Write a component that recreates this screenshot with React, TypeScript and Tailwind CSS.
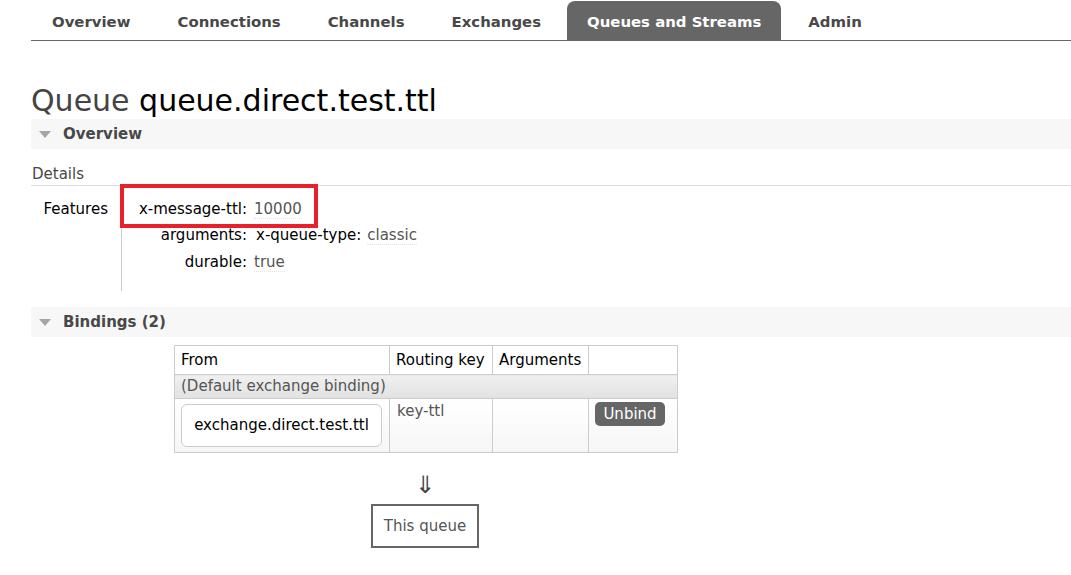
import React from "react";

const tabs = ["Overview", "Connections", "Channels", "Exchanges", "Queues and Streams", "Admin"];

function SectionBar({ title }: { title: string }) {
  return (
    <div className="flex h-[30px] items-center bg-[#f7f7f7]">
      <span className="ml-[8px] h-0 w-0 border-x-[6px] border-t-[7px] border-x-transparent border-t-[#a6a6a6]" />
      <span className="ml-[12px] text-[15px] font-bold text-[#484848]">{title}</span>
    </div>
  );
}

function Val({ children }: { children: React.ReactNode }) {
  return <span className="border-b border-dotted border-[#e4e4e4] text-[#555]">{children}</span>;
}

export default function App() {
  return (
    <div className="min-h-[575px] bg-white pl-[31px] font-['DejaVu_Sans',sans-serif] text-[15px] text-[#333]">
      {/* top tabs */}
      <ul className="flex h-[41px] items-end border-b border-[#666] text-[14.9px]">
        {tabs.map((t) =>
          t === "Queues and Streams" ? (
            <li
              key={t}
              className="mr-[6px] flex h-[39px] items-center rounded-t-[8px] bg-[#666] px-5 pt-[3px] font-bold text-white">
              {t}
            </li>
          ) : (
            <li key={t} className="mr-[6px] flex h-[39px] items-center px-5 pl-[21px] pt-[3px] font-bold text-[#484848]">
              {t}
            </li>
          )
        )}
      </ul>

      <h1 className="mt-[42px] text-[30px] leading-[36px] text-[#444]">
        Queue <span className="text-black">queue.direct.test.ttl</span>
      </h1>

      <SectionBar title="Overview" />

      <div className="relative pt-[15px]">
        <div className="border-b border-[#ddd] pb-px pl-px leading-[20px] text-[#484848]">Details</div>

        <div className="flex">
          <div className="w-[90px] shrink-0 pr-[13px] pt-[12px] text-right leading-[22px] text-black">Features</div>
          <div className="h-[105px] border-l border-[#ccc] pt-[10px]">
            <div className="flex h-[26px] items-center">
              <span className="w-[125px] text-right text-black">x-message-ttl:</span>
              <span className="ml-[7px]">
                <Val>10000</Val>
              </span>
            </div>
            <div className="flex h-[27px] items-center">
              <span className="w-[125px] text-right text-black">arguments:</span>
              <span className="ml-[9px] text-black">x-queue-type:</span>
              <span className="ml-[6px]">
                <Val>classic</Val>
              </span>
            </div>
            <div className="flex h-[27px] items-center">
              <span className="w-[125px] text-right text-black">durable:</span>
              <span className="ml-[7px]">
                <Val>true</Val>
              </span>
            </div>
          </div>
        </div>

        {/* red highlight annotation */}
        <div className="absolute left-[89px] top-[35px] h-[44px] w-[198px] border-4 border-[#e8202a]" />
      </div>

      <div className="mt-[16px]">
        <SectionBar title="Bindings (2)" />
      </div>

      <table className="ml-[143px] mt-[8px] table-fixed border-collapse whitespace-nowrap text-[15px]">
        <colgroup>
          <col className="w-[215px]" />
          <col className="w-[103px]" />
          <col className="w-[96px]" />
          <col className="w-[89px]" />
        </colgroup>
        <thead>
          <tr className="h-[29px] text-black">
            <th className="border border-[#ccc] px-[6px] text-left font-normal">From</th>
            <th className="border border-[#ccc] px-[6px] text-left font-normal">Routing key</th>
            <th className="border border-[#ccc] px-[6px] text-left font-normal">Arguments</th>
            <th className="border border-[#ccc]"></th>
          </tr>
        </thead>
        <tbody>
          <tr className="h-[24px]">
            <td colSpan={4} className="border border-[#ccc] bg-gradient-to-b from-[#f0f0f0] to-[#e2e2e2] px-[6px] text-[#555]">
              (Default exchange binding)
            </td>
          </tr>
          <tr className="h-[54px] bg-gradient-to-b from-white to-[#f6f6f6]">
            <td className="border border-[#ccc] px-[6px] align-middle">
              <div className="flex h-[43px] w-[201px] items-center justify-center rounded-[6px] border border-[#ccc] bg-white text-black">
                exchange.direct.test.ttl
              </div>
            </td>
            <td className="border border-[#ccc] px-[7px] pt-[1px] align-top text-[#555]">key-ttl</td>
            <td className="border border-[#ccc]"></td>
            <td className="border border-[#ccc] px-[6px] pt-[3px] align-top">
              <span className="inline-flex h-[24px] w-[70px] items-center justify-center rounded-[5px] bg-[#666] text-white">
                Unbind
              </span>
            </td>
          </tr>
        </tbody>
      </table>

      <div className="ml-[340px] w-[108px]">
        <div className="mt-[18px] text-center text-[24px] leading-[28px] text-[#444]">⇓</div>
        <div className="mt-[5px] flex h-[44px] items-center justify-center border-2 border-[#666] text-[#555]">
          This queue
        </div>
      </div>
    </div>
  );
}
